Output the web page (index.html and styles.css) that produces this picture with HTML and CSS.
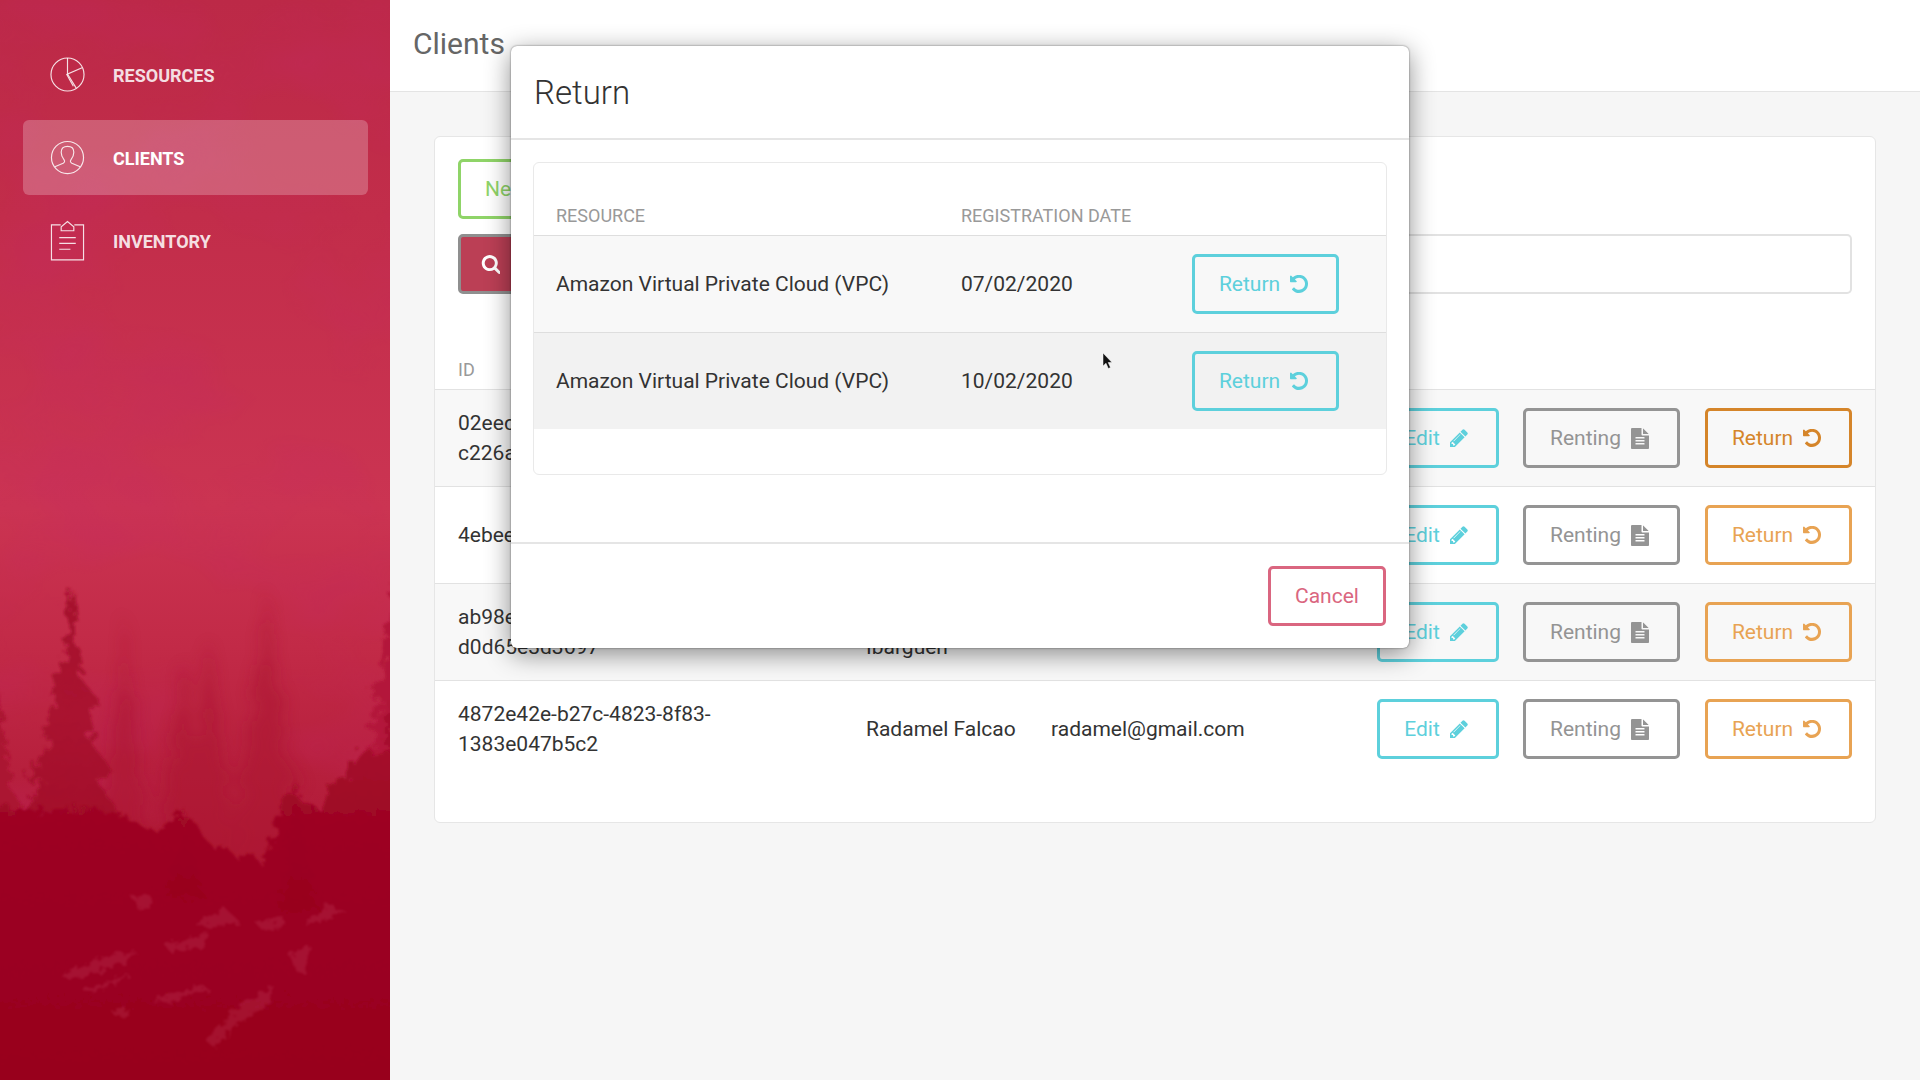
FILE: index.html
```html
<!DOCTYPE html>
<html lang="en">
<head>
<meta charset="utf-8">
<title>Clients</title>
<link rel="stylesheet" href="styles.css">
</head>
<body>
<svg class="defs" width="0" height="0" aria-hidden="true">
  <symbol id="i-undo" viewBox="128 128 1536 1536"><path d="M1664 896q0 156-61 298t-164 245-245 164-298 61q-172 0-327-72.500t-264-204.500q-9-13-8.500-29.500t11.500-27.500l137-138q10-9 25-9 16 2 23 12 73 95 179 147t225 52q104 0 198.500-40.500t163.500-109.500 109.500-163.500 40.500-198.500-40.500-198.500-109.500-163.500-163.500-109.500-198.500-40.500q-98 0-188 35.500t-160 101.500l137 138q31 30 14 69-17 40-59 40h-448q-26 0-45-19t-19-45v-448q0-42 40-59 39-17 69 14l130 129q107-101 244.500-156.500t284.500-55.500q156 0 298 61t245 164 164 245 61 298z"/></symbol>
  <symbol id="i-pencil" viewBox="128 128 1536 1536"><path d="M491 1536l91-91-235-235-91 91v107h128v128h107zm523-928q0-22-22-22-10 0-17 7l-542 542q-7 7-7 17 0 22 22 22 10 0 17-7l542-542q7-7 7-17zm-54-192l416 416-832 832h-416v-416zm683 96q0 53-37 90l-166 166-416-416 166-165q36-38 90-38 53 0 91 38l235 234q37 39 37 91z"/></symbol>
  <symbol id="i-file" viewBox="128 0 1536 1792"><path d="M1596 476q14 14 28 36h-472v-472q22 14 36 28zm-476 164h544v1056q0 40-28 68t-68 28h-1344q-40 0-68-28t-28-68v-1600q0-40 28-68t68-28h800v544q0 40 28 68t68 28zm160 736v-64q0-14-9-23t-23-9h-704q-14 0-23 9t-9 23v64q0 14 9 23t23 9h704q14 0 23-9t9-23zm0-256v-64q0-14-9-23t-23-9h-704q-14 0-23 9t-9 23v64q0 14 9 23t23 9h704q14 0 23-9t9-23zm0-256v-64q0-14-9-23t-23-9h-704q-14 0-23 9t-9 23v64q0 14 9 23t23 9h704q14 0 23-9t9-23z"/></symbol>
  <symbol id="i-search" viewBox="0 128 1664 1664"><path d="M1216 832q0-185-131.500-316.500t-316.500-131.500-316.500 131.500-131.500 316.500 131.500 316.500 316.500 131.500 316.500-131.500 131.500-316.500zm512 832q0 52-38 90t-90 38q-54 0-90-38l-343-342q-179 124-399 124-143 0-273.500-55.500t-225-150-150-225-55.500-273.500 55.500-273.500 150-225 225-150 273.500-55.500 273.500 55.500 225 150 150 225 55.500 273.500q0 220-124 399l343 343q37 37 37 90z"/></symbol>
  <symbol id="tree" viewBox="-30 0 60 100" preserveAspectRatio="none" overflow="visible"><path d="M0 0L2 14L1 15L5 27L2 27L10 35L6 38L9 46L5 46L16 58L9 60L19 72L11 73L23 86L14 86L27 100L-26 100L-15 88L-24 88L-12 74L-20 73L-10 60L-17 60L-8 47L-12 46L-5 34L-9 33L-2 20L-3 18Z"/></symbol>
</svg>

<div class="app">
  <aside class="sidebar">
    <svg class="forest" viewBox="0 0 390 1080" preserveAspectRatio="none" aria-hidden="true">
      <defs>
        <linearGradient id="sky" x1="0" y1="0" x2="0" y2="1">
          <stop offset="0" stop-color="#bc2947"/>
          <stop offset=".2" stop-color="#c22d4a"/>
          <stop offset=".47" stop-color="#cb3452"/>
          <stop offset=".6" stop-color="#c22a47"/>
          <stop offset=".72" stop-color="#b61f3c"/>
          <stop offset=".85" stop-color="#ab1432"/>
          <stop offset="1" stop-color="#a00a28"/>
        </linearGradient>
        <linearGradient id="trunk" x1="0" y1="0" x2="0" y2="1">
          <stop offset="0" stop-color="#a20c2b" stop-opacity=".9"/>
          <stop offset=".4" stop-color="#a50e2d" stop-opacity=".8"/>
          <stop offset="1" stop-color="#9e0725"/>
        </linearGradient>
        <linearGradient id="ground" x1="0" y1="0" x2="0" y2="1">
          <stop offset="0" stop-color="#a60e2d"/>
          <stop offset=".25" stop-color="#9d0523"/>
          <stop offset="1" stop-color="#98001e"/>
        </linearGradient>
        <filter id="mottle" x="0" y="0" width="100%" height="100%">
          <feTurbulence type="fractalNoise" baseFrequency=".006 .009" numOctaves="3" seed="7"/>
          <feColorMatrix values="0 0 0 0 .55  0 0 0 0 .02  0 0 0 0 .14  1.6 0 0 0 -.72"/>
        </filter>
        <filter id="rough" x="-20%" y="-10%" width="140%" height="120%">
          <feTurbulence type="fractalNoise" baseFrequency=".11" numOctaves="3" seed="4" result="n"/>
          <feDisplacementMap in="SourceGraphic" in2="n" scale="20"/>
          <feGaussianBlur stdDeviation="1.300"/>
        </filter>
        <filter id="foggy" x="-30%" y="-10%" width="160%" height="120%">
          <feTurbulence type="fractalNoise" baseFrequency=".08" numOctaves="3" seed="9" result="n"/>
          <feDisplacementMap in="SourceGraphic" in2="n" scale="16"/>
          <feGaussianBlur stdDeviation="7"/>
        </filter>
        <filter id="rocks" x="-10%" y="-10%" width="120%" height="120%">
          <feTurbulence type="fractalNoise" baseFrequency=".14" numOctaves="3" seed="11" result="n"/>
          <feDisplacementMap in="SourceGraphic" in2="n" scale="12"/>
          <feGaussianBlur stdDeviation="1"/>
        </filter>
      </defs>
      <rect width="390" height="1080" fill="url(#sky)"/>
      <rect width="390" height="1080" filter="url(#mottle)" opacity=".5"/>
      <g filter="url(#foggy)" fill="#ac1433" opacity=".55">
        <use href="#tree" x="205" y="590" width="125" height="330"/>
        <use href="#tree" x="85" y="615" width="80" height="260"/>
        <use href="#tree" x="165" y="640" width="90" height="240"/>
        <use href="#tree" x="130" y="660" width="110" height="260"/>
      </g>
      <g filter="url(#rough)">
        <use href="#tree" x="-8" y="588" width="160" height="320" fill="url(#trunk)"/>
        <use href="#tree" x="352" y="555" width="90" height="240" fill="#b3193a"/>
        <use href="#tree" x="335" y="700" width="110" height="220" fill="#a50e2d"/>
        <use href="#tree" x="-40" y="690" width="80" height="200" fill="#ab1332"/>
      </g>
      <g filter="url(#rough)" fill="url(#ground)">
        <path d="M-10 805L40 812L90 808L130 818L150 832L170 825L180 812L195 822L205 838L215 850L225 845L240 862L250 850L262 866L275 830L285 790L300 800L320 810L332 782L345 778L360 752L380 755L400 740V1090H-10Z"/>
        <use href="#tree" x="160" y="808" width="50" height="90"/>
        <use href="#tree" x="272" y="780" width="50" height="130"/>
      </g>
      <g filter="url(#rocks)" fill="#b93350" opacity=".36">
        <path d="M132 897L150 895L155 905L140 912Z"/>
        <path d="M195 925L225 908L240 922L205 928Z"/>
        <path d="M255 922L285 918L282 928L262 930Z"/>
        <path d="M302 925L328 905L345 910L320 922Z"/>
        <path d="M60 975L100 958L135 950L130 960L90 975L70 980Z"/>
        <path d="M82 990L130 974L128 978L90 993Z"/>
        <path d="M150 1000L200 985L210 989L170 1003Z"/>
        <path d="M165 945L210 932L200 948L170 952Z"/>
        <path d="M205 1040L240 1005L275 985L268 1005L235 1025L215 1048Z"/>
        <path d="M290 955L310 945L305 975L295 970Z"/>
        <path d="M110 1010L130 1008L128 1015L115 1016Z"/>
      </g>
    </svg>
    <nav class="nav">
      <a class="nav-item">
        <svg class="nav-icon" viewBox="0 0 36 36"><circle cx="18" cy="18" r="17"/><path d="M18 1V17.500L33 11M18 17.500L27 32"/><path d="M17 17.500L24 30"/></svg>
        <span class="nav-label">RESOURCES</span>
      </a>
      <a class="nav-item active">
        <svg class="nav-icon" viewBox="0 0 36 36"><circle cx="18" cy="18" r="16.500"/><path d="M5 27.500L13.500 24C15 23 15.500 22 14.500 20.500C12.500 18 11.500 15 11.500 12.500C11.500 8.500 14 6.500 18 6.500C22 6.500 24.500 8.500 24.500 12.500C24.500 15 23.500 18 21.500 20.500C20.500 22 21 23 22.500 24L31 27.500"/></svg>
        <span class="nav-label">CLIENTS</span>
      </a>
      <a class="nav-item">
        <svg class="nav-icon tall" viewBox="0 0 36 42"><path d="M11 5H1.500V41H34.500V5H25"/><path d="M11.500 11V7L18 1.500L24.500 7V11Z"/><path d="M9.500 18H26.500M9.500 24H26.500M9.500 30H21"/></svg>
        <span class="nav-label">INVENTORY</span>
      </a>
    </nav>
  </aside>

  <main class="main">
    <header class="topbar"><h1>Clients</h1></header>
    <div class="content">
      <section class="card">
        <button class="btn btn-new">New client</button>
        <div class="search-row">
          <button class="btn-search"><svg class="ico-search"><use href="#i-search"/></svg></button>
          <div class="search-input"></div>
        </div>
        <div class="table">
          <div class="row head"><span>ID</span></div>
          <div class="row odd">
            <span class="id">02eed1f4-6c3a-4b7e-9a12-c226a8f0d3b1</span><span>James Rodriguez</span><span>james@gmail.com</span>
            <div class="actions">
              <button class="btn btn-edit">Edit <svg class="ico"><use href="#i-pencil"/></svg></button>
              <button class="btn btn-rent">Renting <svg class="ico ico-file"><use href="#i-file"/></svg></button>
              <button class="btn btn-ret hot">Return <svg class="ico"><use href="#i-undo"/></svg></button>
            </div>
          </div>
          <div class="row">
            <span class="id one">4ebee7a0-31cd-4f6a-b8e2-90d1c47e5a26</span><span>Nairo Quintana</span><span>nairo@gmail.com</span>
            <div class="actions">
              <button class="btn btn-edit">Edit <svg class="ico"><use href="#i-pencil"/></svg></button>
              <button class="btn btn-rent">Renting <svg class="ico ico-file"><use href="#i-file"/></svg></button>
              <button class="btn btn-ret">Return <svg class="ico"><use href="#i-undo"/></svg></button>
            </div>
          </div>
          <div class="row odd">
            <span class="id">ab98e3c1-57f2-4d09-a6b4-d0d65e3d3697</span><span class="name-wrap">Caterine Ibarguen</span><span>caterine@gmail.com</span>
            <div class="actions">
              <button class="btn btn-edit">Edit <svg class="ico"><use href="#i-pencil"/></svg></button>
              <button class="btn btn-rent">Renting <svg class="ico ico-file"><use href="#i-file"/></svg></button>
              <button class="btn btn-ret">Return <svg class="ico"><use href="#i-undo"/></svg></button>
            </div>
          </div>
          <div class="row">
            <span class="id">4872e42e-b27c-4823-8f83-1383e047b5c2</span><span>Radamel Falcao</span><span>radamel@gmail.com</span>
            <div class="actions">
              <button class="btn btn-edit">Edit <svg class="ico"><use href="#i-pencil"/></svg></button>
              <button class="btn btn-rent">Renting <svg class="ico ico-file"><use href="#i-file"/></svg></button>
              <button class="btn btn-ret">Return <svg class="ico"><use href="#i-undo"/></svg></button>
            </div>
          </div>
        </div>
      </section>
    </div>
  </main>
</div>

<div class="modal">
  <header class="modal-head"><h2>Return</h2></header>
  <div class="modal-body">
    <div class="inner">
      <div class="mrow mhead"><span>RESOURCE</span><span>REGISTRATION DATE</span></div>
      <div class="mrow first">
        <span>Amazon Virtual Private Cloud (VPC)</span><span>07/02/2020</span>
        <button class="btn btn-mret">Return <svg class="ico"><use href="#i-undo"/></svg></button>
      </div>
      <div class="mrow second">
        <span>Amazon Virtual Private Cloud (VPC)</span><span>10/02/2020</span>
        <button class="btn btn-mret">Return <svg class="ico"><use href="#i-undo"/></svg></button>
      </div>
    </div>
  </div>
  <footer class="modal-foot"><button class="btn btn-cancel">Cancel</button></footer>
</div>

<svg class="cursor" viewBox="0 0 12 18" aria-hidden="true"><path d="M1 1V14L4 11.200L6.300 16.500L8.500 15.500L6.200 10.500H10Z"/></svg>
</body>
</html>
```

FILE: styles.css
```css
* { box-sizing: border-box; }
html, body { margin: 0; height: 100%; }
body {
  position: relative;
  width: 1920px;
  height: 1080px;
  overflow: hidden;
  background: #f6f6f6;
  font-family: Roboto, "Liberation Sans", sans-serif;
  font-size: 21px;
  line-height: 30px;
  color: #333;
}
.defs { position: absolute; }
.app { display: flex; height: 1080px; }

/* sidebar */
.sidebar {
  position: relative;
  flex: 0 0 390px;
  height: 1080px;
  overflow: hidden;
  background: #c22d4a;
}
.forest { position: absolute; inset: 0; width: 390px; height: 1080px; }
.nav {
  position: relative;
  display: flex;
  flex-direction: column;
  gap: 8px;
  padding: 37px 22px 0 23px;
}
.nav-item {
  display: flex;
  align-items: center;
  gap: 28px;
  height: 75px;
  padding-left: 27px;
  border-radius: 6px;
  color: rgba(255, 255, 255, .86);
  font-size: 18px;
  font-weight: 700;
  line-height: 20px;
}
.nav-label { padding-top: 2px; }
.nav-item.active { background: rgba(255, 255, 255, .23); color: #fff; }
.nav-icon {
  flex: 0 0 35px;
  width: 35px;
  height: 35px;
  fill: none;
  stroke: rgba(255, 255, 255, .85);
  stroke-width: 1.200;
}
.nav-icon.tall { height: 41px; }

/* main */
.main { flex: 1; display: flex; flex-direction: column; min-width: 0; }
.topbar {
  flex: 0 0 92px;
  display: flex;
  align-items: center;
  padding: 0 23px 3px;
  background: #fff;
  border-bottom: 1px solid #e4e4e4;
}
.topbar h1 { margin: 0; font-size: 30px; font-weight: 400; color: #666; line-height: 40px; }
.content { padding: 44px 44px 0; }
.card {
  height: 687px;
  padding: 22px 0 0;
  background: #fff;
  border: 1px solid #e6e6e6;
  border-radius: 6px;
}

/* buttons */
.btn {
  display: inline-flex;
  align-items: center;
  justify-content: center;
  gap: 10px;
  height: 60px;
  padding: 0;
  background: transparent;
  border: 3px solid;
  border-radius: 5px;
  font: inherit;
}
.ico { width: 18px; height: 18px; fill: currentColor; }
.ico-file { height: 21px; }
.btn-new { display: flex; padding: 0 24px; margin-left: 23px; color: #8fd468; border-color: #8fd468; }
.search-row { display: flex; margin: 15px 23px 0; }
.btn-search {
  flex: 0 0 64px;
  height: 60px;
  background: #bb3f55;
  border: 3px solid #8f8f8f;
  border-radius: 5px 0 0 5px;
  display: flex;
  align-items: center;
  justify-content: center;
  padding: 0;
}
.ico-search { width: 19px; height: 19px; fill: #fff; }
.search-input {
  flex: 1;
  height: 60px;
  background: #fff;
  border: 2px solid #e2e2e2;
  border-left: 0;
  border-radius: 0 5px 5px 0;
}

/* table */
.row {
  display: grid;
  grid-template-columns: 408px 185px 1fr auto;
  align-items: center;
  height: 97px;
  padding: 0 23px;
  border-bottom: 1px solid #e2e2e2;
}
.row:last-child { border-bottom: 0; height: 96px; }
.row.odd { background: #f8f8f8; }
.row.head {
  height: 96px;
  align-items: end;
  padding-bottom: 9px;
  font-size: 18px;
  line-height: 20px;
  color: #999;
}
.id { max-width: 270px; overflow-wrap: break-word; }
.id.one { max-width: none; white-space: nowrap; }
.name-wrap { max-width: 100px; }
.actions { display: flex; gap: 24px; }
.btn-edit { width: 122px; padding-right: 4px; color: #5dd0dc; border-color: #5dd0dc; }
.btn-rent { width: 157px; padding-right: 4px; color: #949494; border-color: #949494; margin-right: 1px; }
.btn-ret { width: 147px; padding-right: 4px; color: #e8a353; border-color: #e8a353; }
.btn-ret.hot { color: #d5852a; border-color: #d5852a; }

/* modal */
.modal {
  position: absolute;
  left: 511px;
  top: 46px;
  display: flex;
  flex-direction: column;
  width: 898px;
  height: 602px;
  background: #fff;
  border-radius: 6px;
  box-shadow: 0 0 2px rgba(0, 0, 0, .55), 0 6px 26px rgba(0, 0, 0, .45);
}
.modal-head {
  flex: 0 0 94px;
  display: flex;
  align-items: center;
  padding: 2px 23px 0;
  border-bottom: 2px solid #e5e5e5;
}
.modal-head h2 { margin: 0; font-size: 33px; font-weight: 300; color: #333; line-height: 40px; }
.modal-body { flex: 1; padding: 22px 22px 0; }
.inner {
  height: 313px;
  border: 1px solid #e9e9e9;
  border-radius: 6px;
}
.mrow {
  display: grid;
  grid-template-columns: 405px 231px auto;
  align-items: center;
  height: 97px;
  padding: 0 22px;
}
.mrow.mhead {
  height: 73px;
  align-items: end;
  padding-bottom: 9px;
  font-size: 18px;
  line-height: 20px;
  color: #999;
  border-bottom: 1px solid #dedede;
}
.mrow.first { background: #f8f8f8; border-bottom: 1px solid #dedede; }
.mrow.second { background: #f2f2f2; height: 96px; }
.btn-mret { width: 147px; padding-right: 4px; color: #5dd0dc; border-color: #5dd0dc; }
.modal-foot {
  flex: 0 0 106px;
  display: flex;
  justify-content: flex-end;
  align-items: flex-start;
  padding: 22px 23px 0 0;
  border-top: 2px solid #e5e5e5;
}
.btn-cancel { width: 118px; color: #da6680; border-color: #da6680; }

.cursor {
  position: absolute;
  left: 1102px;
  top: 352px;
  width: 12px;
  height: 18px;
  fill: #111;
  stroke: #fff;
  stroke-width: .5;
}
```
